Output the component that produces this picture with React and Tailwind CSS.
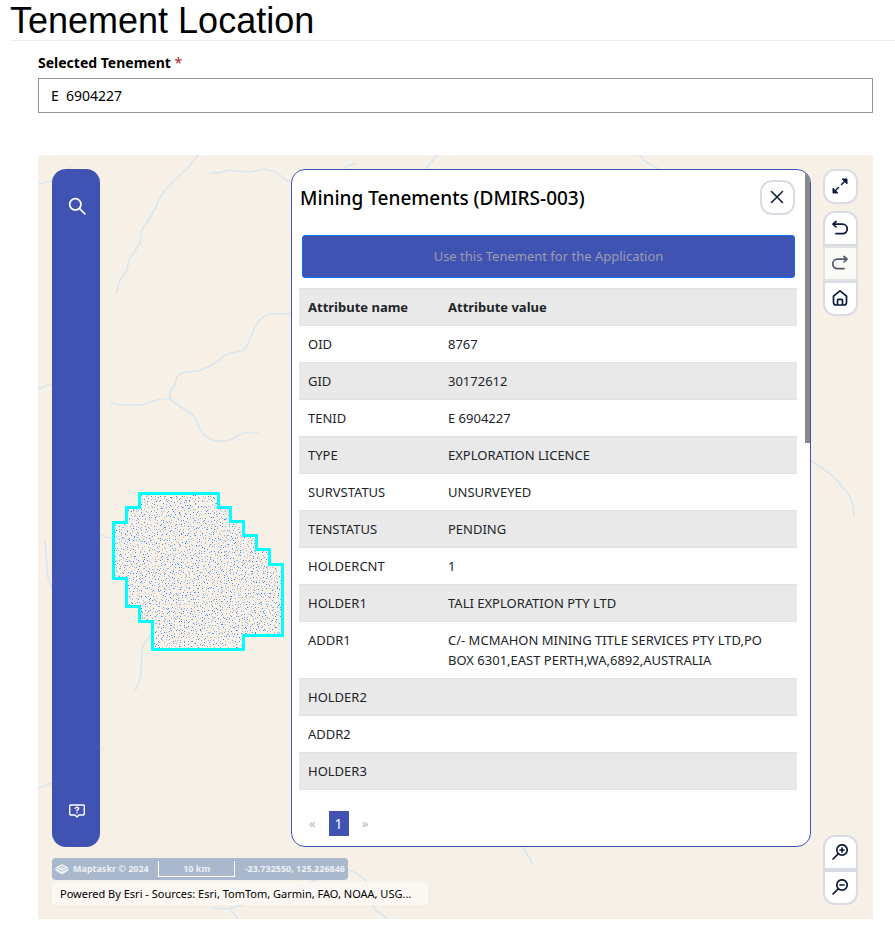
import React from "react";

const rows = [
  ["OID", "8767"],
  ["GID", "30172612"],
  ["TENID", "E 6904227"],
  ["TYPE", "EXPLORATION LICENCE"],
  ["SURVSTATUS", "UNSURVEYED"],
  ["TENSTATUS", "PENDING"],
  ["HOLDERCNT", "1"],
  ["HOLDER1", "TALI EXPLORATION PTY LTD"],
  ["ADDR1", "C/- MCMAHON MINING TITLE SERVICES PTY LTD,PO BOX 6301,EAST PERTH,WA,6892,AUSTRALIA"],
  ["HOLDER2", ""],
  ["ADDR2", ""],
  ["HOLDER3", ""],
];

const rivers = [
  "M160 0L149 14L138 24L127 35L122 43L116 55L110 66L104 74L102 88L91 105L89 115L82 125L78 138",
  "M173 18L181 18L190 15L210 17L227 14L238 17L248 25L255 27",
  "M0 29L14 26M30 14L32 12",
  "M255 158L250 159L232 159Q226 160 220 167C214 174 211 193 205 195Q195 198 189 199C184 202 180 207 174 210Q164 215 159 216L147 217Q141 219 139 222L136 232Q129 236 133 245Q143 252 155 260C161 268 160 279 175 285Q185 287 192 285L205 278H220",
  "M73 248L82 250H104L121 244H133",
  "M0 234L9 230H14",
  "M114 478L106 489Q104 492 104 498L103 520Q102 526 97 536",
  "M62 379Q67 383 74 383L110 387",
  "M7 387L9 410Q9 425 14 433",
  "M0 633L14 628M62 596L65 593",
  "M773 306Q797 320 804 332Q814 341 815 352L816 361",
  "M175 753L188 754L211 748H230L241 741L268 729L302 714Q312 712 327 725C333 738 331 754 342 758L350 764M192 754L200 764",
  "M306 14Q310 9 318 9M388 14L399 0M602 0Q606 8 621 14",
  "M485 692L494 708",
];

const outline =
  "M101.500 338.500H180.500V352.500H192.500V366.500H205.500V380.500H218.500V394.500H231.500V409.500H244.500V480.500H205.500V494.500H114.500V466.500H101.500V451.500H88.500V423.500H75.500V367.500H88.500V352.500H101.500Z";

const dots = [];
for (let y = 0; y < 54; y += 1) {
  for (let x = 0; x < 58; x += 1) {
    const h = Math.abs(Math.sin(x * 127.1 + y * 311.7) * 43758.5);
    dots.push([76 + x * 3 + (Math.floor(h) % 3), 340 + y * 3 + (Math.floor(h / 3) % 3), Math.floor(h / 9) % 3]);
  }
}
const dotPath = (kind) => dots.filter((d) => d[2] === kind).map((d) => `M${d[0]} ${d[1]}h1v1h-1z`).join("");

function MapCanvas() {
  return (
    <svg className="absolute top-0 left-0 h-[764px] w-[835px] max-w-none" viewBox="0 0 835 764" fill="none" aria-hidden="true">
      <clipPath id="tenement"><path d={outline} /></clipPath>
      <g stroke="#d9e6ee" strokeWidth="1.6" strokeLinejoin="round" strokeLinecap="round">
        {rivers.map((d) => <path key={d} d={d} />)}
      </g>
      <g clipPath="url(#tenement)">
        <path d={dotPath(0)} fill="#3d8af0" />
        <path d={dotPath(1)} fill="#7fabec" />
        <path d={dotPath(2)} fill="#a6b8da" />
      </g>
      <path d={outline} stroke="#00ffff" strokeWidth="3" />
    </svg>
  );
}

function Icon({ children, size = "size-4", width = 1.7 }) {
  return (
    <svg className={size} viewBox="0 0 16 16" fill="none" stroke="currentColor" strokeWidth={width} strokeLinecap="round" strokeLinejoin="round" aria-hidden="true">
      {children}
    </svg>
  );
}

const control = "flex h-[35px] w-[35px] items-center justify-center border-2 border-[#d9dde3] bg-white pr-px pb-px text-[#0b1a3a]";

export default function App() {
  return (
    <main className="bg-white font-['Noto_Sans',sans-serif] text-black">
      <h1 className="ml-[10px] h-[41px] border-b border-[#eeeeee] font-['Liberation_Sans',sans-serif] text-[36px] leading-[41px]">Tenement Location</h1>
      <div className="ml-[38px] mr-[22px]">
        <label htmlFor="tenement-id" className="block pt-3 text-[14px] leading-5 font-bold">
          Selected Tenement <span className="font-normal text-[#a4262c]">*</span>
        </label>
        <input id="tenement-id" defaultValue="E  6904227" className="mt-[5px] block h-[35px] w-full border border-[#949494] px-3 text-[14px] outline-none" />

        <section aria-label="Map" className="relative mt-[42px] h-[764px] overflow-hidden bg-[#f6f0e6] pt-[14px] pr-[15px] pl-[14px]">
          <MapCanvas />
          <div className="relative flex h-[736px]">
            <nav className="flex h-[678px] w-12 flex-col items-center justify-between rounded-[14px] bg-[#4053b3] py-7 pl-[2px] text-white">
              <button aria-label="Search">
                <Icon size="size-[18px]" width={1.5}><circle cx="6.500" cy="6.500" r="5" /><path d="M10.200 10.200L15 15" /></Icon>
              </button>
              <button aria-label="Help">
                <Icon width={1.4}>
                  <path d="M1.500 2H14.500Q15.300 2 15.300 3V11Q15.300 12 14.500 12H10L8 14L6 12H1.500Q.7 12 .7 11V3Q.7 2 1.500 2Z" />
                  <path d="M6.300 5.500Q6.500 4.300 8 4.300T9.700 5.600Q9.700 6.500 8 7.300V7.900M8 9.700V9.900" />
                </Icon>
              </button>
            </nav>

            <section className="relative ml-auto flex h-[678px] w-[520px] flex-col overflow-hidden rounded-[14px] border border-[#4053b3] bg-white pr-[13px] pl-[7px]">
              <div className="absolute top-0 right-0 h-[273px] w-[5px] bg-[#888888]" />
              <header className="mr-[2px] ml-px flex h-[65px] items-center justify-between pb-[10px]">
                <h2 className="text-[19px] leading-6 font-medium">Mining Tenements (DMIRS-003)</h2>
                <button aria-label="Close" className="flex h-[35px] w-[35px] items-center justify-center rounded-[12px] border-2 border-[#d9dde3] pr-px pb-px text-[#0b1a3a]">
                  <Icon width={1.5}><path d="M2.500 2.500L13.500 13.500M13.500 2.500L2.500 13.500" /></Icon>
                </button>
              </header>
              <button disabled className="mr-[2px] ml-[3px] h-[43px] shrink-0 rounded-[3px] border border-[#0d6efd] bg-[#4053b3] text-[13px] text-[#9a9eaf]">Use this Tenement for the Application</button>
              <table className="mt-[10px] w-full table-fixed border-collapse text-left text-[13px] leading-5 text-[#212529]">
                <thead>
                  <tr className="h-[37px] border-y border-[#dee2e6] bg-[#e9e9e9]">
                    <th className="w-[140px] pr-2 pl-[9px] font-bold">Attribute name</th>
                    <th className="pr-5 pl-[9px] font-bold">Attribute value</th>
                  </tr>
                </thead>
                <tbody>
                  {rows.map(([name, value], i) => (
                    <tr key={name} className={i % 2 ? "h-[37px] border-b border-[#dee2e6] bg-[#e9e9e9]" : "h-[37px] border-b border-[#dee2e6]"}>
                      <td className="py-2 pr-2 pl-[9px] align-top">{name}</td>
                      <td className="py-2 pr-5 pl-[9px] align-top">{value}</td>
                    </tr>
                  ))}
                </tbody>
              </table>
              <div className="mt-auto mb-[10px] flex items-center gap-[13px] pl-[10px] text-[13px] text-[#b5b5b5]">
                <button>«</button>
                <button className="h-[25px] w-5 bg-[#4053b3] text-[14px] text-white">1</button>
                <button>»</button>
              </div>
            </section>

            <div className="ml-3 flex flex-col">
              <button aria-label="Full screen" className={`${control} rounded-[12px]`}>
                <Icon width={1.5}>
                  <path d="M9.500 6.500L13 3M6.500 9.500L3 13" />
                  <path d="M10.500 1H15V5.500ZM5.500 15H1V10.500Z" fill="currentColor" strokeWidth="1" />
                </Icon>
              </button>
              <div className="mt-[7px] flex flex-col">
                <button aria-label="Undo" className={`${control} rounded-t-[12px]`}>
                  <Icon><path d="M4 1.500L1 4.200L4 7M1.200 4.200H10.500A4.500 4.500 0 0 1 10.500 13.700H4" /></Icon>
                </button>
                <button aria-label="Redo" disabled className={`${control} opacity-70`}>
                  <Icon><path d="M12 1.500L15 4.200L12 7M14.800 4.200H5.500A4.500 4.500 0 0 0 5.500 13.700H12" /></Icon>
                </button>
                <button aria-label="Home" className={`${control} rounded-b-[12px]`}>
                  <Icon><path d="M1.500 6.200L8 .9L14.500 6.200V12.500Q14.500 15 12 15H4Q1.500 15 1.500 12.500ZM5.500 15V10.500Q5.500 9.300 6.500 9.300H9.500Q10.500 9.300 10.500 10.500V15" /></Icon>
                </button>
              </div>
              <div className="mt-auto flex flex-col">
                <button aria-label="Zoom in" className={`${control} rounded-t-[12px]`}>
                  <Icon><circle cx="10" cy="6" r="5.200" /><path d="M6.200 9.800L1 15M8 6H12M10 4V8" /></Icon>
                </button>
                <button aria-label="Zoom out" className={`${control} rounded-b-[12px]`}>
                  <Icon><circle cx="10" cy="6" r="5.200" /><path d="M6.200 9.800L1 15M8 6H12" /></Icon>
                </button>
              </div>
            </div>
          </div>

          <footer className="absolute bottom-[14px] left-[14px] flex flex-col items-start gap-[2px]">
            <div className="flex h-[22px] w-[296px] items-center rounded-[4px] bg-[#a9b8cc] px-[3px] text-[9px] font-bold whitespace-nowrap text-[#eef1f5]">
              <svg className="size-[14px] shrink-0" viewBox="0 0 14 14" aria-hidden="true">
                <path d="M7 2L13.500 5.500V8.500L7 12.500L.5 8.500V5.500Z" fill="currentColor" />
                <path d="M.5 6L7 9.300L13.500 6M4.500 5.300L7 4L9.500 5.300L7 6.600Z" fill="none" stroke="#a9b8cc" strokeWidth=".8" />
              </svg>
              <span className="ml-1">Maptaskr © 2024</span>
              <span className="mx-auto h-4 w-[77px] border-x border-b border-white text-center leading-[15px]">10 km</span>
              <span>-23.732550, 125.226846</span>
            </div>
            <p className="h-[23px] w-[376px] rounded-[4px] bg-[#fbf8f4]/85 px-2 text-[11px] leading-[23px] whitespace-nowrap">Powered By Esri - Sources: Esri, TomTom, Garmin, FAO, NOAA, USG...</p>
          </footer>
        </section>
      </div>
    </main>
  );
}
